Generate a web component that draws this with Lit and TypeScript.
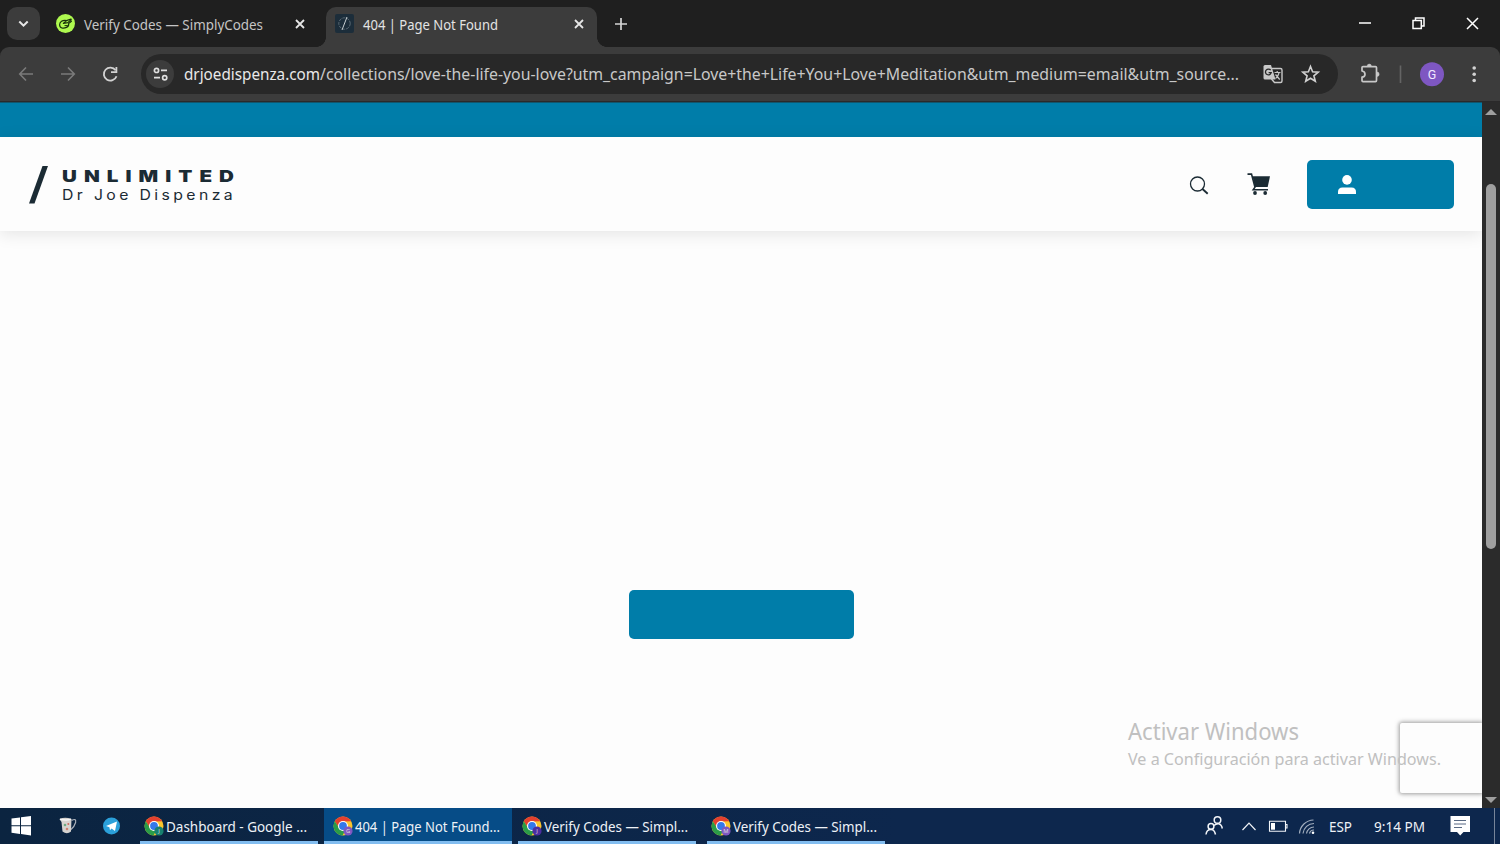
import { LitElement, html, svg, css } from "lit";
import { customElement } from "lit/decorators.js";

// A line of text fitted to a known width, with its baseline 15px below the box top.
const label = (text: string, width: number, cls: string) => html`
  <svg class="label ${cls}" width=${width} height="20" role="text">
    <text x="0" y="15" textLength=${width} lengthAdjust="spacingAndGlyphs">${text}</text>
  </svg>`;

const chrome = (badge: string, letter: string) => svg`
  <circle cx="10" cy="10" r="9.5" fill="#fbc52c"/>
  <path d="M1.8 5.2 A9.5 9.5 0 0 1 18.2 5.2 L10 5.5 L6 12 Z" fill="#e3402f"/>
  <path d="M1.8 5.2 A9.5 9.5 0 0 0 9.5 19.5 L12.5 14 L6 12 Z" fill="#2a9c48"/>
  <circle cx="10" cy="10" r="5" fill="#fff"/>
  <circle cx="10" cy="10" r="3.9" fill="#3478ea"/>
  <circle cx="15" cy="15" r="4.6" fill=${badge}/>
  <text x="15" y="17.1" font-size="5.8" fill="#ddd" text-anchor="middle">${letter}</text>`;

@customElement("app-root")
export class AppRoot extends LitElement {
  static styles = css`
    :host { display: flex; flex-direction: column; width: 1500px; height: 844px; overflow: hidden;
      background: #fdfdfd; font-family: "Noto Sans", "Open Sans", sans-serif; }
    * { box-sizing: border-box; }
    svg { display: block; flex: none; overflow: visible; }
    .label { font-size: 14.6px; fill: currentColor; }
    .tabs { height: 47px; flex: none; display: flex; background: #1f1f1f; color: #c5c5c5; }
    .menu { width: 33px; height: 33px; margin: 7px 0 0 7px; border-radius: 10px; background: #3c3c3c; }
    .tab { display: flex; height: 40px; margin-top: 7px; }
    .idle { width: 286px; padding-left: 16px; }
    .active { width: 271px; padding-left: 9px; background: #3c3c3c; border-radius: 10px 10px 0 0; position: relative; color: #e3e3e3; }
    .active::before, .active::after { content: ""; position: absolute; bottom: 0; width: 10px; height: 10px; }
    .active::before { left: -10px; background: radial-gradient(circle at 0 0, #1f1f1f 9.6px, #3c3c3c 10.2px); }
    .active::after { right: -10px; background: radial-gradient(circle at 10px 0, #1f1f1f 9.6px, #3c3c3c 10.2px); }
    .fav { margin: 7px 9px 0 0; }
    .tab .label { margin-top: 8px; }
    .x1 { margin: 11px 0 0 31px; }
    .x2 { margin: 11px 0 0 75px; }
    .plus { margin: 18px 0 0 18px; }
    .win { margin: 15px 0 0 732px; }
    .corners { background: #1f1f1f; height: 55px; flex: none; }
    .bar { height: 55px; display: flex; align-items: flex-start; background: #3c3c3c; border-bottom: 1px solid #2a292a; border-radius: 9px 9px 0 0; }
    .nav { margin: 18px 0 0 18px; }
    .omni { display: flex; width: 1197px; height: 40px; margin: 7px 0 0 21px; border-radius: 20px; background: #282828; padding-left: 5px; align-items: center; }
    .host, .path { font-size: 16.3px; margin-top: 1px; }
    .host { color: #e9e9e9; margin-left: 10px; }
    .path { color: #c8c8c8; }
    .trans { margin-left: 24px; }
    .star { margin-left: 17px; }
    .right { margin: 11px 0 0 21px; }
    .body { height: 706px; flex: none; display: flex; position: relative; }
    .page { width: 1482px; display: flex; flex-direction: column; background: #fdfdfd; overflow: hidden; }
    .banner { height: 35px; flex: none; background: #007da9; border-top: 1px solid #12566d; }
    .head { height: 94px; flex: none; display: flex; background: #fdfdfd; box-shadow: 0 3px 16px rgba(0,0,0,.1); color: #1b2b34; }
    .slash { margin: 28.5px 0 0 29px; }
    .brand { margin: 30px 0 0 14px; display: flex; flex-direction: column; }
    .unl { font: 900 16px Inter, sans-serif; letter-spacing: 5.5px; }
    .doc { font: 400 14px Inter, sans-serif; letter-spacing: 3px; margin-top: -2px; }
    .tools { margin: 34.5px 0 0 949px; }
    .account { width: 147px; height: 49px; margin: 23px 0 0 36px; background: #007da9; border-radius: 5px; padding: 15px 0 0 31px; }
    .cta { width: 225px; height: 49px; margin: 359px 0 0 629px; background: #007da9; border-radius: 5px; flex: none; }
    .captcha { width: 82px; height: 70px; margin: 84px 0 0 auto; flex: none; background: #fdfdfd; box-shadow: 0 0 4px 1px rgba(90,90,90,.6); border-radius: 2px 0 0 2px; }
    .mark { position: absolute; left: 1127.5px; top: 623px; color: #c0c0c0; }
    .m1 { font-size: 23px; }
    .m2 { font-size: 16.8px; margin-top: 5px; }
    .scroll { width: 18px; background: #2b2b2b; display: flex; flex-direction: column; align-items: center; }
    .up { margin-top: 7px; }
    .thumb { width: 10px; height: 365px; margin-top: 69px; border-radius: 5px; background: #9f9f9f; }
    .down { margin-top: 248px; }
    .task { height: 36px; flex: none; display: flex; background: linear-gradient(90deg, #0b2440, #0d274d 60%); color: #eef2f7; }
    .pins { width: 140px; }
    .app { display: flex; height: 36px; width: 178px; margin-right: 6px; padding: 8px 0 0 4px; border-bottom: 3px solid #82bdf0; }
    .on { width: 188px; padding-left: 9px; background: #064c87; }
    .last { margin-left: 5px; }
    .app .label { margin: 1px 0 0 2px; }
    .tray { margin: 0 0 0 314px; }
    .lang, .time { margin-top: 8.5px; font-size: 14.2px; }
    .lang { margin-left: 14px; }
    .time { margin-left: 22px; }
    .note { margin: 8px 0 0 25px; }
    .peek { width: 1px; margin-left: 24px; background: #768499; }
  `;

  private close(cls: string) {
    return html`<svg class=${cls} width="12" height="12"><path d="M2 2L10 10M10 2L2 10" stroke="#e6e6e6" stroke-width="1.8"/></svg>`;
  }

  render() {
    return html`
      <div class="tabs">
        <div class="menu"><svg width="33" height="33"><path d="M12.3 14.5L16.5 18.7L20.7 14.5" fill="none" stroke="#e6e6e6" stroke-width="2"/></svg></div>
        <div class="tab idle">
          <svg class="fav" width="19" height="19">
            <circle cx="9.5" cy="9.5" r="9.5" fill="#aef94f"/>
            <path d="M15 5L10.5 6.6C6.5 5.8 3.6 8 3.6 10.8C3.6 14.4 7.5 14.8 10.5 13.4C12.8 12.4 12.9 11 12.6 9.6L15.4 7.2M10.5 6.6L7.4 9.5L11.8 8.6L15.2 5.6" fill="none" stroke="#17310b" stroke-width="1.2" stroke-linejoin="round" stroke-linecap="round"/>
            <path d="M8.5 11.6H11.8" stroke="#17310b" stroke-width="1"/>
          </svg>
          ${label("Verify Codes — SimplyCodes", 179, "")}${this.close("x1")}
        </div>
        <div class="tab active">
          <svg class="fav" width="19" height="19"><rect width="19" height="19" rx="2" fill="#1c2d3a"/>
            <circle cx="9.5" cy="9.5" r="5.7" fill="none" stroke="#75838b" stroke-width=".7" stroke-dasharray="3 1"/>
            <path d="M12 3L7 16" stroke="#c5cccf" stroke-width="1"/></svg>
          ${label("404 | Page Not Found", 135, "")}${this.close("x2")}
        </div>
        <svg class="plus" width="12" height="12"><path d="M6 0V12M0 6H12" stroke="#d5d5d5" stroke-width="1.7"/></svg>
        <svg class="win" width="122" height="16"><g fill="none" stroke="#fff" stroke-width="1.5">
          <path d="M0 8H12M108 3L119 14M119 3L108 14"/><path d="M54 5.5H62.3V13.5H54ZM56.5 5V3H65V11H63"/></g></svg>
      </div>
      <div class="corners"><div class="bar">
        <svg class="nav" width="102" height="18"><g fill="none" stroke-width="1.6">
          <path d="M15 9H2M8 2.5L1.7 9L8 15.5M43 9H56M50 2.5L56.3 9L50 15.5" stroke="#7a7a7a"/>
          <path d="M97.6 5.3A6.5 6.5 0 1 0 98.5 11.2" stroke="#d2d2d2" stroke-width="1.8"/><path d="M98.4 2V7.2H93" stroke="#d2d2d2" stroke-width="1.8"/></g></svg>
        <div class="omni">
          <svg width="28" height="28"><circle cx="14" cy="14" r="14" fill="#3c3c3c"/><g fill="none" stroke="#e0e0e0" stroke-width="1.7">
            <circle cx="10.5" cy="10.4" r="2.1"/><path d="M15 10.4H21M8 17.7H14"/><circle cx="18.7" cy="17.7" r="2.1"/></g></svg>
          ${label("drjoedispenza.com", 136, "host")}${label("/collections/love-the-life-you-love?utm_campaign=Love+the+Life+You+Love+Meditation&utm_medium=email&utm_source...", 919, "path")}
          <svg class="trans" width="20" height="20"><path d="M8.5 4.5H17.5Q19 4.5 19 6V17Q19 18.5 17.5 18.5H11.5L8.5 15" fill="none" stroke="#c8c8c8" stroke-width="1.4"/>
            <path d="M2 1H8L12.5 15.5H2Q.5 15.5 .5 14V2.5Q.5 1 2 1Z" fill="#c8c8c8"/><path d="M7.7 6.2A2.9 2.9 0 1 0 8.2 8.7H5.6" fill="none" stroke="#282828" stroke-width="1.3"/>
            <path d="M11.5 8.5H17.5M14.2 7V8.5M16 9Q15 13 12.5 14.5M12.5 10.5L16.7 15.5" stroke="#c8c8c8" stroke-width="1.2" fill="none"/></svg>
          <svg class="star" width="20" height="20"><path d="M10.5 2.5L12.6 7.8L18.2 8.2L13.9 11.8L15.3 17.2L10.5 14.2L5.7 17.2L7.1 11.8L2.8 8.2L8.4 7.8Z" fill="none" stroke="#d0d0d0" stroke-width="1.6"/></svg>
        </div>
        <svg class="right" width="120" height="34">
          <path d="M4 8.6H16.5Q17.5 8.6 17.5 9.6V22.6Q17.5 23.6 16.5 23.6H4Q3 23.6 3 22.6V19.2Q6 18.8 6 16.2Q6 13.5 3 13V9.6Q3 8.6 4 8.6Z" fill="none" stroke="#c8c8c8" stroke-width="1.7" stroke-linejoin="round"/>
          <path d="M8.2 8.2A2.1 2.1 0 0 1 12.4 8.2ZM18 14A2.1 2.1 0 0 1 18 18.4Z" fill="#c8c8c8" stroke="#c8c8c8" stroke-width=".5"/>
          <path d="M41.5 7.5V25" stroke="#646464" stroke-width="1.6"/>
          <circle cx="73" cy="16.3" r="12" fill="#7e57c2"/><text x="73" y="20.7" font-size="12.5" fill="#f1eaff" text-anchor="middle" font-family="Roboto">G</text>
          <g fill="#d2d2d2"><circle cx="115.2" cy="10" r="1.8"/><circle cx="115.2" cy="16.2" r="1.8"/><circle cx="115.2" cy="22.5" r="1.8"/></g></svg>
      </div></div>
      <div class="body">
        <div class="page">
          <div class="banner"></div>
          <div class="head">
            <svg class="slash" width="19" height="38"><path d="M13.5 0H19L5.5 37.5H0Z" fill="#1b2b34"/></svg>
            <div class="brand">${label("UNLIMITED", 179, "unl")}${label("Dr Joe Dispenza", 174, "doc")}</div>
            <svg class="tools" width="81" height="28" fill="none">
              <circle cx="7.5" cy="12" r="7" stroke="#1b2b34" stroke-width="1.3"/><path d="M12.5 17L17.7 21.7" stroke="#1b2b34" stroke-width="1.9"/>
              <path d="M62.5 4.2H80L77.7 15H65Z" fill="#1b2b34"/><path d="M57.5 2.1H61.5L65 15.2L63.2 17.8H78" stroke="#1b2b34" stroke-width="1.6"/>
              <circle cx="65" cy="21" r="1.9" fill="#1b2b34"/><circle cx="75.2" cy="21" r="1.9" fill="#1b2b34"/></svg>
            <div class="account"><svg width="18" height="20"><circle cx="9" cy="4.9" r="4.8" fill="#fff"/><path d="M0 19V17Q0 12.5 4.5 12.5H13.5Q18 12.5 18 17V19Z" fill="#fff"/></svg></div>
          </div>
          <div class="cta"></div>
          <div class="captcha"></div>
        </div>
        <div class="scroll">
          <svg class="up" width="12" height="6"><path d="M0 6L6 0L12 6Z" fill="#9f9f9f"/></svg>
          <div class="thumb"></div>
          <svg class="down" width="12" height="6"><path d="M0 0H12L6 6Z" fill="#9f9f9f"/></svg>
        </div>
        <div class="mark">${label("Activar Windows", 171, "m1")}${label("Ve a Configuración para activar Windows.", 313, "m2")}</div>
      </div>
      <div class="task">
        <svg class="pins" width="140" height="36">
          <path d="M11.5 10.6L20 9.4V17.2H11.5ZM21 9.3L31 7.9V17.2H21ZM11.5 18.2H20V26L11.5 24.8ZM21 18.2H31V27.5L21 26.1Z" fill="#fff"/>
          <path d="M59.5 11Q65 8.5 71.5 11L71 23.5Q67 27 62.5 23.5L61.5 14Z" fill="#d6d3cf"/><path d="M60 11.2Q66 12.8 71 11.2" fill="none" stroke="#f6f6f6" stroke-width="1.4"/>
          <path d="M71.5 12.5Q76.5 9.8 75.6 14.5Q74.5 18.5 71 21.5" fill="none" stroke="#aab0ba" stroke-width="1.2"/>
          <circle cx="65" cy="17" r="1.3" fill="#6fa982"/><circle cx="68.3" cy="16" r="1" fill="#cf6a60"/><circle cx="67" cy="21" r="1.3" fill="#cf8271"/>
          <circle cx="111.5" cy="18" r="8.5" fill="#2ba0da"/><path d="M106 18L117 13.5L115 23L111.5 20.5L110 22.3L109.4 19.2Z" fill="#fff"/>
        </svg>
        <div class="app"><svg width="20" height="20">${chrome("#17816f", "J")}</svg>${label("Dashboard - Google ...", 141, "")}</div>
        <div class="app on"><svg width="20" height="20">${chrome("#7e57c2", "G")}</svg>${label("404 | Page Not Found...", 145, "")}</div>
        <div class="app"><svg width="20" height="20">${chrome("#4d2da0", "J")}</svg>${label("Verify Codes — Simpl...", 144, "")}</div>
        <div class="app last"><svg width="20" height="20">${chrome("#7e57c2", "M")}</svg>${label("Verify Codes — Simpl...", 144, "")}</div>
        <svg class="tray" width="110" height="36"><g fill="none" stroke="#f1f4f8" stroke-width="1.5">
          <circle cx="12.5" cy="12" r="3.3"/><circle cx="6" cy="18.4" r="2.9"/><path d="M1 26.5Q1.5 21.5 6 21.5Q9.5 21.5 10.5 26.5M9 17.5Q11 15.6 13.5 15.8Q16.6 16.4 17.3 20.5"/>
          <path d="M37.5 22L44 15.2L50.5 22" stroke-width="1.2"/><path d="M64.5 13.2H80.5V23.2H64.5ZM81 16.5H82V20H81" stroke-width="1.1"/></g>
          <path d="M66 15H70V21.7H66Z" fill="#fff"/><g fill="none" stroke="#a3afbf" stroke-width="1.2">
          <path d="M94.5 25.5A14.5 14.5 0 0 1 108.5 12M98 25.5A11 11 0 0 1 109 15.5M101.5 25.5A7.5 7.5 0 0 1 109 19M104.5 25.5A4.5 4.5 0 0 1 109 22"/></g><circle cx="108" cy="24.7" r="1.3" fill="#fff"/></svg>
        ${label("ESP", 23, "lang")}${label("9:14 PM", 51, "time")}
        <svg class="note" width="20" height="20"><path d="M.5 0H20V16H13.5L10.2 19.5L7 16H.5Z" fill="#fff"/><path d="M4 4.5H16M4 8H16M4 11.5H12" stroke="#586983" stroke-width="1.2"/></svg>
        <div class="peek"></div>
      </div>`;
  }
}
